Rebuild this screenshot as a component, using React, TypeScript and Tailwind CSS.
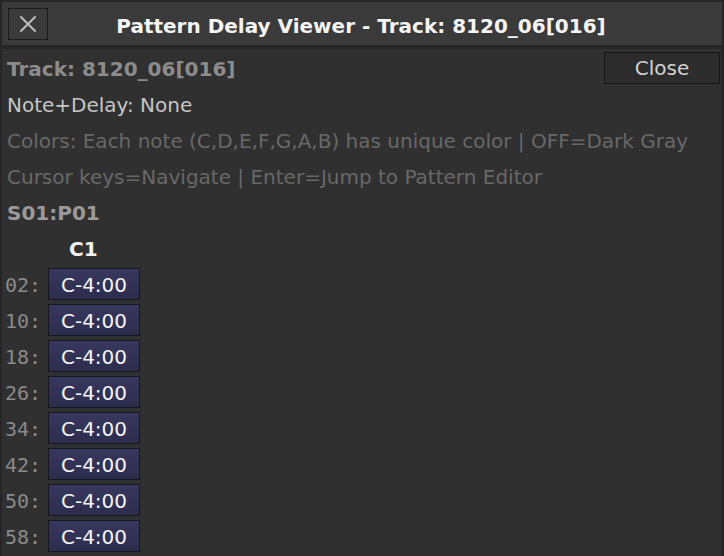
import React from "react";

const rows = ["02", "10", "18", "26", "34", "42", "50", "58"];

function CloseGlyph() {
  return (
    <svg width="16" height="16" viewBox="0 0 16 16" className="block">
      <path d="M1 1 L15 15 M15 1 L1 15" stroke="#bdbdbd" strokeWidth="2" strokeLinecap="square" fill="none" />
    </svg>
  );
}

export default function App() {
  const sans = { fontFamily: '"DejaVu Sans", "Liberation Sans", sans-serif' };
  return (
    <div
      className="w-[724px] h-[556px] bg-[#262626] flex flex-col overflow-hidden text-[20px]"
      style={sans}
    >
      {/* title bar */}
      <div className="mt-[2px] mx-[2px] h-[43px] bg-[#3a3a3a] flex items-start shrink-0">
        <button className="ml-[6px] mt-[6px] w-[40px] h-[32px] bg-[#3b3b3b] border border-[#1c1c1c] flex items-center justify-center">
          <CloseGlyph />
        </button>
        <div className="flex-1 text-center mt-[7px] leading-[34px] h-[32px] font-bold text-[#f4f4f4] mr-[48px] whitespace-nowrap">
          Pattern Delay Viewer - Track: 8120_06[016]
        </div>
      </div>

      {/* body */}
      <div className="mt-[4px] ml-[2px] mr-[3px] flex-1 bg-[#303030] pt-[3px] pl-[5px] flex flex-col gap-[4px] leading-[34px] whitespace-nowrap">
        <div className="h-[32px] flex items-start">
          <span className="font-bold text-[#8c8c8c]">Track: 8120_06[016]</span>
          <button className="ml-auto mr-[1px] w-[116px] h-[32px] bg-[#2c2c2c] border border-[#161616] text-[#d2d2d2] leading-[31px] text-center">
            Close
          </button>
        </div>
        <div className="h-[32px] text-[#c6c6c6]">Note+Delay: None</div>
        <div className="h-[32px] text-[#686868]">
          Colors: Each note (C,D,E,F,G,A,B) has unique color | OFF=Dark Gray
        </div>
        <div className="h-[32px] text-[#686868]">Cursor keys=Navigate | Enter=Jump to Pattern Editor</div>
        <div className="h-[32px] font-bold text-[#9a9a9a]">S01:P01</div>
        <div className="h-[32px] font-bold text-[#f2f2f2] pl-[62px]">C1</div>
        {rows.map((r) => (
          <div key={r} className="h-[32px] flex items-start">
            <span
              className="w-[43px] -ml-[2px] h-[32px] text-[#8a8a8a]"
              style={{ fontFamily: '"DejaVu Sans Mono", "Liberation Mono", monospace' }}
            >
              {r}:
            </span>
            <div className="w-[92px] h-[32px] border border-[#16161f] bg-gradient-to-b from-[#383860] to-[#2c2c4c] text-[#f4f4f4] text-center leading-[32px]">
              C-4:00
            </div>
          </div>
        ))}
      </div>
    </div>
  );
}
